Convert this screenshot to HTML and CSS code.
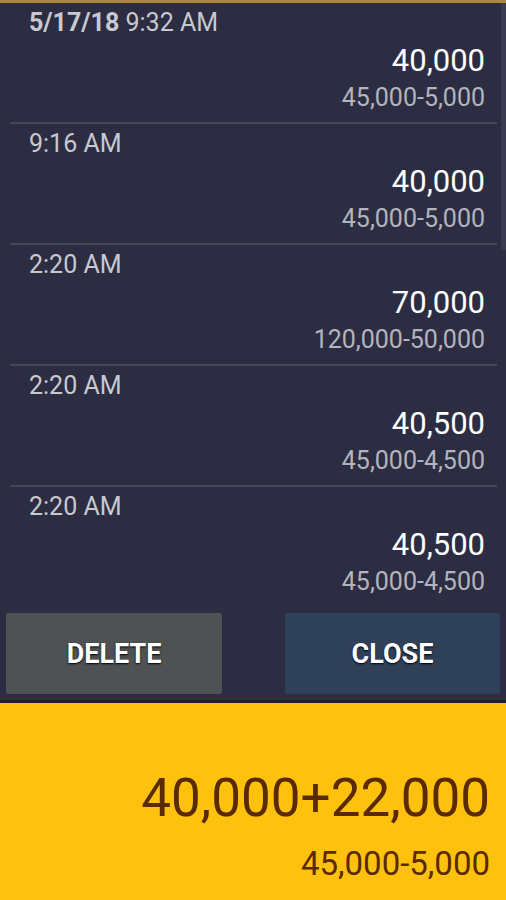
FILE: index.html
```html
<!DOCTYPE html>
<html lang="en">
<head>
<meta charset="UTF-8">
<meta name="viewport" content="width=device-width, initial-scale=1.0">
<title>History</title>
<link rel="stylesheet" href="styles.css">
</head>
<body>
<div class="app">
  <div class="history">
    <ul class="history-list">
      <li class="entry">
        <div class="entry-time"><b>5/17/18</b> 9:32 AM</div>
        <div class="entry-result">40,000</div>
        <div class="entry-expr">45,000-5,000</div>
      </li>
      <li class="entry">
        <div class="entry-time">9:16 AM</div>
        <div class="entry-result">40,000</div>
        <div class="entry-expr">45,000-5,000</div>
      </li>
      <li class="entry">
        <div class="entry-time">2:20 AM</div>
        <div class="entry-result">70,000</div>
        <div class="entry-expr">120,000-50,000</div>
      </li>
      <li class="entry">
        <div class="entry-time">2:20 AM</div>
        <div class="entry-result">40,500</div>
        <div class="entry-expr">45,000-4,500</div>
      </li>
      <li class="entry">
        <div class="entry-time">2:20 AM</div>
        <div class="entry-result">40,500</div>
        <div class="entry-expr">45,000-4,500</div>
      </li>
    </ul>
    <div class="scrollbar"></div>

    <div class="actions">
      <button class="btn btn-delete">DELETE</button>
      <button class="btn btn-close">CLOSE</button>
    </div>
  </div>

  <div class="display">
    <div class="display-main">40,000+22,000</div>
    <div class="display-sub">45,000-5,000</div>
  </div>
</div>
</body>
</html>
```

FILE: styles.css
```css
body {
  margin: 0;
  padding: 0;
  font-family: Roboto, "Noto Sans", Arial, sans-serif;
  background-color: #2c2d42;
}

.app {
  height: 900px;
  display: flex;
  flex-direction: column;
  overflow: hidden;
}

.history {
  position: relative;
  background-color: #2c2d42;
  border-top: 3px solid #a98a3d;
  border-bottom: 3px solid #1e1f30;
  padding-bottom: 6px;
}

.history-list {
  list-style-type: none;
  margin: 0;
  padding: 0;
}

.entry {
  margin: 0 9px 0 10px;
  padding: 6px 12px 10px 19px;
  border-bottom: 2px solid #45475a;
}

.entry:last-child {
  border-bottom: none;
}

.entry-time {
  font-size: 25px;
  line-height: 28px;
  color: #c8c9cf;
}

.entry-time b {
  font-weight: 700;
}

.entry-result {
  margin-top: 6px;
  font-size: 31px;
  line-height: 36px;
  color: #ffffff;
  text-align: right;
}

.entry-expr {
  margin-top: 5px;
  font-size: 25px;
  line-height: 28px;
  color: #b3b4bd;
  text-align: right;
}

.scrollbar {
  position: absolute;
  top: 0;
  right: 0;
  width: 5px;
  height: 247px;
  background-color: #3a3b50;
}

.actions {
  display: flex;
  justify-content: space-between;
  padding: 7px 6px 0 6px;
}

.btn {
  height: 81px;
  border: none;
  border-radius: 2px;
  font-family: Roboto, Arial, sans-serif;
  font-size: 27px;
  font-weight: 700;
  color: #ffffff;
  text-shadow: 0 1px 2px #000;
  cursor: pointer;
}

.btn-delete {
  width: 216px;
  background-color: #4e5253;
}

.btn-close {
  width: 215px;
  background-color: #2f4059;
}

.display {
  flex: 1;
  background-color: #fec20e;
  padding: 65px 16px 0 0;
  text-align: right;
  color: #5a2a03;
}

.display-main {
  font-size: 53px;
  line-height: 60px;
}

.display-sub {
  margin-top: 16px;
  font-size: 33px;
  line-height: 40px;
}
```
